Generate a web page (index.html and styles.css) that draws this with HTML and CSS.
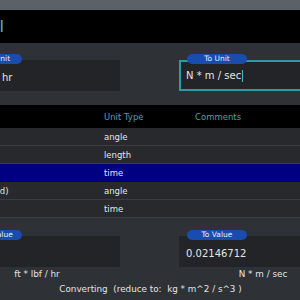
FILE: index.html
```
<!DOCTYPE html>
<html lang="en">
<head>
  <meta charset="UTF-8">
  <title>Unit Converter</title>
  <link rel="stylesheet" href="styles.css">
</head>
<body>
  <div class="app">
    <div class="topstrip"></div>

    <header class="titlebar">
      <div class="title"><span>Unit Converter Tool</span></div>
    </header>

    <section class="pair units">
      <div class="field">
        <span class="pill">From Unit</span>
        <div class="box">ft * lbf / hr</div>
      </div>
      <div class="field active">
        <span class="pill">To Unit</span>
        <div class="box">N * m / sec<span class="caret"></span></div>
      </div>
    </section>

    <table class="unit-list">
      <thead>
        <tr><th class="c-name">Unit</th><th class="c-type">Unit Type</th><th>Comments</th></tr>
      </thead>
      <tbody>
        <tr><td>degree</td><td>angle</td><td></td></tr>
        <tr><td>foot</td><td>length</td><td></td></tr>
        <tr class="selected"><td>hour</td><td>time</td><td></td></tr>
        <tr><td>radian (rad)</td><td>angle</td><td></td></tr>
        <tr><td>second</td><td>time</td><td></td></tr>
      </tbody>
    </table>

    <section class="pair values">
      <div class="field">
        <span class="pill">From Value</span>
        <div class="box">100</div>
        <div class="unit-label">ft * lbf / hr</div>
      </div>
      <div class="field">
        <span class="pill">To Value</span>
        <div class="box">0.02146712</div>
        <div class="unit-label">N * m / sec</div>
      </div>
    </section>

    <p class="status">Converting&nbsp; (reduce to:&nbsp; kg * m^2 / s^3 )</p>
  </div>
</body>
</html>
```

FILE: styles.css
```
body {
  margin: 0;
  background: #2e3135;
  font-family: "DejaVu Sans", sans-serif;
  color: #e4e4e4;
  overflow: hidden;
}

.app {
  width: 393px;
  margin-left: -46px;
}

.topstrip {
  height: 10px;
  background: #5b6166;
}

.titlebar {
  height: 33px;
  background: #000;
}

/* title is wider than what shows, keep its end on screen */
.title {
  width: 50px;
  display: flex;
  justify-content: flex-end;
  font-size: 16px;
  line-height: 33px;
  color: #5ab8c4;
  white-space: nowrap;
}

.pair {
  display: grid;
  grid-template-columns: 166px 168px;
  justify-content: space-between;
}

.units {
  margin-top: 17px;
}

.field {
  position: relative;
}

.pill {
  position: absolute;
  top: -6px;
  left: 8px;
  width: 60px;
  height: 10px;
  line-height: 10px;
  border-radius: 5px;
  background: #1a4cae;
  color: #e8eefa;
  font-size: 7.5px;
  text-align: center;
  z-index: 1;
}

.box {
  height: 31px;
  line-height: 31px;
  box-sizing: border-box;
  padding: 0 5px;
  border: 2px solid transparent;
  background: #222427;
  font-size: 10px;
  white-space: nowrap;
  overflow: hidden;
}

.active .box {
  border-color: #2c9ba6;
  line-height: 27px;
}

.caret {
  display: inline-block;
  width: 1px;
  height: 12px;
  margin-left: 1px;
  vertical-align: middle;
  background: #4cb6d0;
}

.unit-list {
  width: 393px;
  margin-top: 14px;
  border-collapse: collapse;
  font-size: 8.5px;
  table-layout: fixed;
}

.unit-list th {
  height: 23px;
  background: #000;
  color: #3fa4b4;
  font-weight: normal;
  text-align: left;
  padding: 0 4px;
}

.unit-list th.c-name {
  width: 138px;
}

.unit-list th.c-type {
  width: 83px;
}

.unit-list td {
  height: 17px;
  padding: 0 4px;
  background: #27292c;
  border-bottom: 1px solid #3a3d41;
  white-space: nowrap;
}

.unit-list tr.selected td {
  background: #000080;
  border-bottom-color: #00005a;
}

.values {
  margin-top: 18px;
}

.unit-label {
  height: 14px;
  line-height: 14px;
  text-align: center;
  font-size: 8.8px;
}

.status {
  margin: 1px 0 0;
  line-height: 14px;
  text-align: center;
  font-size: 8.8px;
}
```
